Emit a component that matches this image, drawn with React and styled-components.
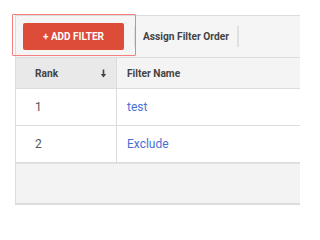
import React from 'react';
import styled, { createGlobalStyle } from 'styled-components';

const GlobalStyle = createGlobalStyle`
  html, body {
    margin: 0;
    padding: 0;
    background: #fff;
    overflow: hidden;
    font-family: Roboto, "Liberation Sans", Arial, sans-serif;
  }
`;

const Page = styled.div`
  width: 300px;
  height: 208px;
  padding: 15px 0 0 15px;
  box-sizing: border-box;
  overflow: hidden;
`;

const Panel = styled.div`
  border: 1px solid #dcdcdc;
  border-right: none;
`;

const Toolbar = styled.div`
  position: relative;
  display: flex;
  align-items: center;
  height: 41px;
  padding-left: 7px;
  background: #f5f5f5;
  border-bottom: 1px solid #dcdcdc;
`;

const Highlight = styled.div`
  position: absolute;
  left: -4px;
  top: -2px;
  width: 122px;
  height: 40px;
  border: 1.5px solid #f57f7f;
  border-radius: 1px;
  pointer-events: none;
`;

const AddButton = styled.button`
  width: 101px;
  height: 27px;
  margin-top: -1px;
  border: none;
  border-radius: 2px;
  background: #dd4b39;
  color: #fff;
  font-family: inherit;
  font-size: 10px;
  font-weight: 700;
  text-transform: uppercase;
  cursor: pointer;
`;

const Divider = styled.span`
  display: block;
  flex: none;
  width: 2px;
  height: 21px;
  background: #e0e0e0;
  margin: 0 ${p => p.$right || 0}px 0 ${p => p.$left || 0}px;
`;

const TextButton = styled.span`
  font-size: 10.2px;
  font-weight: 700;
  color: #444;
  white-space: nowrap;
`;

const Table = styled.div`
  display: grid;
  grid-template-columns: 101px 1fr;
`;

const HeadCell = styled.div`
  display: flex;
  align-items: center;
  justify-content: space-between;
  height: 30px;
  padding: 0 9px 0 ${p => p.$pad}px;
  background: ${p => (p.$sorted ? '#e9e9e9' : '#f4f4f4')};
  border-right: ${p => (p.$sorted ? '1px solid #dcdcdc' : 'none')};
  border-bottom: 1px solid #dcdcdc;
  font-size: 10.2px;
  font-weight: 700;
  color: #444;
`;

const Cell = styled.div`
  display: flex;
  align-items: center;
  height: 36px;
  padding-left: ${p => p.$pad}px;
  border-right: ${p => (p.$first ? '1px solid #dcdcdc' : 'none')};
  border-bottom: 1px solid #dcdcdc;
  font-size: 12px;
  color: ${p => (p.$link ? '#4b6fd6' : '#555')};
`;

const Footer = styled.div`
  height: 39px;
  background: #f3f3f3;
  border-top: 1px solid #e2e2e2;
  border-bottom: 1px solid #dcdcdc;
`;

const SortArrow = () => (
  <svg width="7" height="9" viewBox="0 0 7 9">
    <path d="M3.5 0.5v5.5" stroke="#444" strokeWidth="1.6" />
    <path d="M0.8 5h5.4L3.5 8.5z" fill="#444" />
  </svg>
);

const rows = [
  { rank: 1, name: 'test' },
  { rank: 2, name: 'Exclude' },
];

export default function App() {
  return (
    <>
      <GlobalStyle />
      <Page>
        <Panel>
          <Toolbar>
            <Highlight />
            <AddButton>+ Add Filter</AddButton>
            <Divider $left={10} $right={7} />
            <TextButton>Assign Filter Order</TextButton>
            <Divider $left={8} />
          </Toolbar>
          <Table>
            <HeadCell $sorted $pad={19}>
              Rank
              <SortArrow />
            </HeadCell>
            <HeadCell $pad={10}>Filter Name</HeadCell>
            {rows.map(r => (
              <React.Fragment key={r.rank}>
                <Cell $first $pad={19}>{r.rank}</Cell>
                <Cell $link $pad={10}>{r.name}</Cell>
              </React.Fragment>
            ))}
          </Table>
          <Footer />
        </Panel>
      </Page>
    </>
  );
}
